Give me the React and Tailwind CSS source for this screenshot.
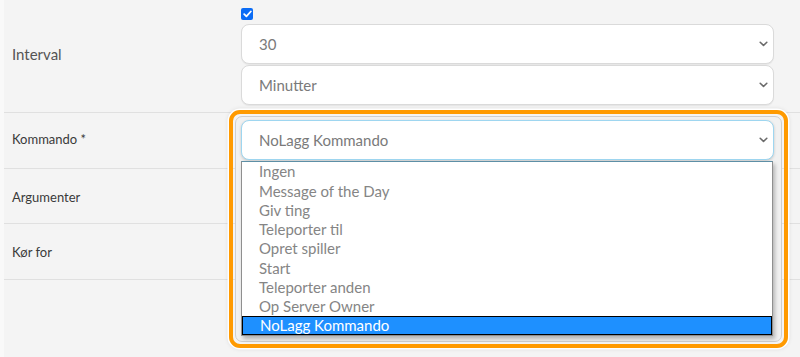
// Scheduled task form with the command dropdown opened
const commands = [
  "Ingen",
  "Message of the Day",
  "Giv ting",
  "Teleporter til",
  "Opret spiller",
  "Start",
  "Teleporter anden",
  "Op Server Owner",
  "NoLagg Kommando",
];

function Chevron() {
  return (
    <svg width="9" height="6" viewBox="0 0 9 6" className="shrink-0">
      <path d="M1.2 1.3 L4.5 4.5 L7.8 1.3" fill="none" stroke="#6a6a6a" strokeWidth="1.6" strokeLinecap="round" strokeLinejoin="round" />
    </svg>
  );
}

function Select({ value, focused }) {
  return (
    <div
      className={
        "relative z-10 flex h-[40px] items-center justify-between rounded-[8px] border bg-white pl-[17px] pr-[5px] text-[15px] text-[#7a7a7a] " +
        (focused
          ? "border-[#9ed6f0] shadow-[0_1px_3px_rgba(0,0,0,0.18)]"
          : "border-[#dadada] shadow-[0_1px_1px_rgba(0,0,0,0.06)]")
      }
    >
      <span>{value}</span>
      <Chevron />
    </div>
  );
}

function Row({ label, small, children, className, labelClass }) {
  return (
    <div className={"grid grid-cols-[237px_533px] border-b border-[#e0e0e0] " + (className || "")}>
      <div
        className={
          "flex items-center pl-2 " +
          (small ? "text-[13px] text-[#3a3a3a] " : "text-[15px] text-[#555] ") +
          (labelClass || "")
        }
      >
        {label}
      </div>
      <div className="flex flex-col">{children}</div>
    </div>
  );
}

function CommandDropdown() {
  return (
    <div className="absolute left-0 right-[1px] top-full z-20 mt-[1px] border border-[#8f8f8f] border-t-[#5d8fa6] bg-white shadow-[2px_3px_4px_rgba(0,0,0,0.25)]">
      {commands.map((c) => {
        const active = c === "NoLagg Kommando";
        return (
          <div
            key={c}
            className={
              "flex h-[19.25px] items-center pl-[17px] text-[15px] " +
              (active ? "border border-black bg-[#1e90ff] pl-[16px] text-white" : "text-[#858585]")
            }
          >
            {c}
          </div>
        );
      })}
    </div>
  );
}

export default function App() {
  return (
    <div className="h-[357px] w-[800px] overflow-hidden bg-[#f9f9f9] pl-[4px] font-['Lato','Noto_Sans',sans-serif]">
      <div className="h-full bg-[#f4f4f4]">
        <Row label="Interval" className="pb-[7px] pt-[8px]" labelClass="pb-[5px]">
          <span className="mb-[4px] flex size-[12px] items-center justify-center rounded-[2px] bg-[#0b6cf5]">
            <svg width="9" height="8" viewBox="0 0 9 8">
              <path d="M1.2 4.2 L3.4 6.3 L7.8 1.5" fill="none" stroke="#fff" strokeWidth="1.8" strokeLinecap="round" strokeLinejoin="round" />
            </svg>
          </span>
          <Select value="30" />
          <div className="mt-[1px]">
            <Select value="Minutter" />
          </div>
        </Row>

        <Row label="Kommando *" small className="pb-[8px] pt-[7px]">
          <div className="relative">
            {/* orange highlight frame around the opened select */}
            <div className="absolute left-[-12px] top-[-10px] z-0 h-[238px] w-[559px] rounded-[11px] border-4 border-[#ff9a00] shadow-[0_0_0_1.5px_#fff,0_0_5px_rgba(0,0,0,0.18)]">
              <div className="absolute inset-[2px] rounded-[7px] border border-[#cfcfcf] bg-[#f1f1f1]" />
            </div>
            <Select value="NoLagg Kommando" focused />
            <CommandDropdown />
          </div>
        </Row>

        <Row label="Argumenter" small className="h-[55px]" labelClass="pt-[3px]" />
        <Row label="Kør for" small className="h-[56px]" labelClass="pt-[2px]" />
      </div>
    </div>
  );
}
